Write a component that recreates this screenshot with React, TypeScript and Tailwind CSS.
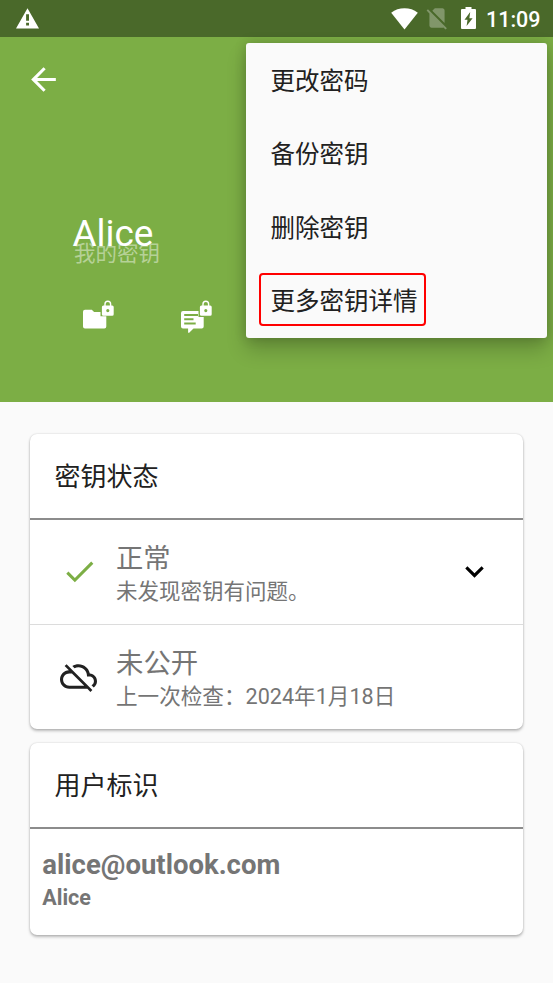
import React from "react";

const menuItems = ["更改密码", "备份密钥", "删除密钥"];

function Lock() {
  return (
    <path
      fillRule="evenodd"
      d="M21.300 5.500V4a3.500 3.500 0 0 1 7 0v1.500h.9a1.500 1.500 0 0 1 1.500 1.500v7.200a1.500 1.500 0 0 1-1.500 1.500h-8.800a1.500 1.500 0 0 1-1.500-1.500V7a1.500 1.500 0 0 1 1.500-1.500zM22.700 5.500h4.200V4a2.100 2.100 0 0 0-4.200 0zM24.800 9a1.600 1.600 0 1 0 0 3.200 1.600 1.600 0 0 0 0-3.200z"
    />
  );
}

function StatusBar() {
  return (
    <div className="flex h-[37px] items-center bg-[#4a692a] pl-4 pr-[13px] text-white">
      <svg className="-mt-px h-[21px] w-[23px]" viewBox="0 0 23 21" fill="currentColor">
        <path fillRule="evenodd" d="M0 20.600 11.500.2 23 20.600zM10.100 6.300v6.500h2.900v-6.500zM10.100 14.800v2.800H13v-2.800z" />
      </svg>
      <svg className="ml-auto h-[22px] w-[27px]" viewBox="0 0 27 22" fill="currentColor">
        <path d="M.2 4.800C4 1.700 8.500.3 13.500.3s9.500 1.400 13.300 4.500L13.500 21.600z" />
      </svg>
      <svg className="-mt-px ml-[6px] h-[26px] w-[26px] opacity-30" viewBox="0 0 24 24" fill="currentColor">
        <path d="M18.990 5c0-1.100-.89-2-1.990-2h-7L7.660 5.340 19 16.680 18.990 5zM3.650 3.880 2.380 5.150 5 7.770V19c0 1.100.9 2 2 2h10.010c.35 0 .67-.1.96-.26l1.880 1.880 1.270-1.270z" />
      </svg>
      <svg className="-mt-px ml-[11px] h-[22px] w-[15px]" viewBox="0 0 15 22" fill="currentColor">
        <path fillRule="evenodd" d="M4.500 0h6v2H14a1 1 0 0 1 1 1v18a1 1 0 0 1-1 1H1a1 1 0 0 1-1-1V3a1 1 0 0 1 1-1h3.500zM9.200 5 3.500 12.800h3L5.600 19l6-7.800H8.400z" />
      </svg>
      <span className="ml-[10.500px] w-[54px] whitespace-nowrap pt-px text-[21.500px] font-medium leading-[37px]">11:09</span>
    </div>
  );
}

function OverflowMenu() {
  return (
    <div className="absolute left-[246px] top-[43px] w-[301px] rounded-[3px] bg-[#fafafa] text-[24.500px] text-[#212121] shadow-[0_12px_20px_rgba(0,0,0,0.2),0_0_12px_rgba(0,0,0,0.18)]">
      {menuItems.map((label) => (
        <div key={label} className="flex h-[73.700px] items-center pl-[24.500px] pt-[4.500px]">
          {label}
        </div>
      ))}
      <div className="flex h-[73.900px] items-start pl-[13px] pt-[9px]">
        <span className="flex h-[53px] w-[167px] items-center whitespace-nowrap rounded-[4px] border-2 border-[#f00] pl-[9.500px] pt-[6px]">
          更多密钥详情
        </span>
      </div>
    </div>
  );
}

function Header() {
  return (
    <header className="h-[365.400px] bg-[#7cae45] text-white">
      <div className="pl-[24.500px] pt-[24px]">
        <svg className="h-[37px] w-[37px]" viewBox="0 0 24 24" fill="currentColor">
          <path d="M20 11H7.830l5.590-5.590L12 4l-8 8 8 8 1.410-1.410L7.830 13H20v-2z" />
        </svg>
      </div>
      <div className="pl-[72.500px] pt-[113.500px]">
        <h1 className="text-[36.900px] leading-[43px]">Alice</h1>
        <p className="-mt-[17px] pl-[1.500px] text-[21.500px] leading-[32px] text-white/45">我的密钥</p>
      </div>
      <div className="flex gap-[66px] pl-[83px] pt-[30px]">
        <svg className="h-8 w-8" viewBox="0 0 32 32" fill="currentColor">
          <path d="M2 9.700H8.800l2.300 2.300H17.500v4.200h5.800v10.300a2 2 0 0 1-2 2H2a2 2 0 0 1-2-2V11.700a2 2 0 0 1 2-2z" />
          <Lock />
        </svg>
        <svg className="h-[34px] w-8" viewBox="0 0 32 34" fill="currentColor">
          <path
            fillRule="evenodd"
            d="M2 11h15.500v6h5.200v9.500a2 2 0 0 1-2 2H12.500L8.200 32.700H7.100v-4.200H2a2 2 0 0 1-2-2V13a2 2 0 0 1 2-2zM3.200 14v1.900H18V14zM3.200 18.300v1.900h9.300v-1.900zM3.200 22.600v1.900h11.500v-1.900z"
          />
          <Lock />
        </svg>
      </div>
    </header>
  );
}

const cardClass = "rounded-[7px] bg-white shadow-[0_2px_3px_rgba(0,0,0,0.25),0_0_2px_rgba(0,0,0,0.18)]";
const titleClass = "flex h-[86px] items-center border-b-2 border-[#8c8c8c] pl-[24.500px] pt-[3px] text-[26px] text-[#212121]";

export default function App() {
  return (
    <div className="relative h-[983px] w-[553px] overflow-hidden bg-[#fafafa] font-['Roboto','Noto_Sans_CJK_SC',sans-serif]">
      <StatusBar />
      <Header />
      <main className="flex flex-col gap-[14px] px-[30px] pt-[31.600px]">
        <section className={cardClass}>
          <h2 className={titleClass}>密钥状态</h2>
          <div className="flex h-[105px] items-center border-b border-[#dcdcdc] pl-[30.500px] pr-[30.500px]">
            <svg className="h-[37px] w-[37px] text-[#7cae45]" viewBox="0 0 24 24" fill="currentColor">
              <path d="M9 16.170 4.830 12l-1.420 1.410L9 19 21 7l-1.410-1.410z" />
            </svg>
            <div className="ml-[18.500px] pt-[6px] text-[#757575]">
              <div className="text-[27.300px] leading-[34px]">正常</div>
              <div className="text-[21.500px] leading-[32px]">未发现密钥有问题。</div>
            </div>
            <svg className="ml-auto h-[37px] w-[37px] text-black" viewBox="0 0 24 24" fill="currentColor">
              <path d="M7.410 8.590 12 13.170l4.590-4.580L18 10l-6 6-6-6z" />
            </svg>
          </div>
          <div className="flex h-[104px] items-center pl-[30.200px]">
            <svg className="-mt-px h-[37px] w-[37px] text-[#212121]" viewBox="0 0 24 24" fill="currentColor">
              <path d="M19.350 10.040C18.670 6.590 15.640 4 12 4c-1.480 0-2.850.43-4.010 1.170l1.460 1.460C10.210 6.230 11.080 6 12 6c3.040 0 5.500 2.460 5.500 5.500v.5H19c1.660 0 3 1.340 3 3 0 1.130-.64 2.110-1.560 2.620l1.450 1.450C23.160 18.160 24 16.680 24 15c0-2.640-2.050-4.780-4.650-4.960zM3 5.270l2.750 2.740C2.560 8.150 0 10.770 0 14c0 3.310 2.690 6 6 6h11.730l2 2L21 20.730 4.270 4 3 5.270zM7.730 10l8 8H6c-2.210 0-4-1.790-4-4s1.790-4 4-4h1.730z" />
            </svg>
            <div className="ml-[18.800px] pt-[6px] text-[#757575]">
              <div className="text-[27.400px] leading-[34px]">未公开</div>
              <div className="whitespace-nowrap text-[21.600px] leading-[32px]">上一次检查：2024年1月18日</div>
            </div>
          </div>
        </section>
        <section className={cardClass}>
          <h2 className={titleClass}>用户标识</h2>
          <div className="h-[106px] pl-[12.300px] pt-[19px] font-bold text-[#757575]">
            <div className="text-[27.500px] leading-[34px]">alice@outlook.com</div>
            <div className="text-[21.500px] leading-[32px]">Alice</div>
          </div>
        </section>
      </main>
      <OverflowMenu />
    </div>
  );
}
